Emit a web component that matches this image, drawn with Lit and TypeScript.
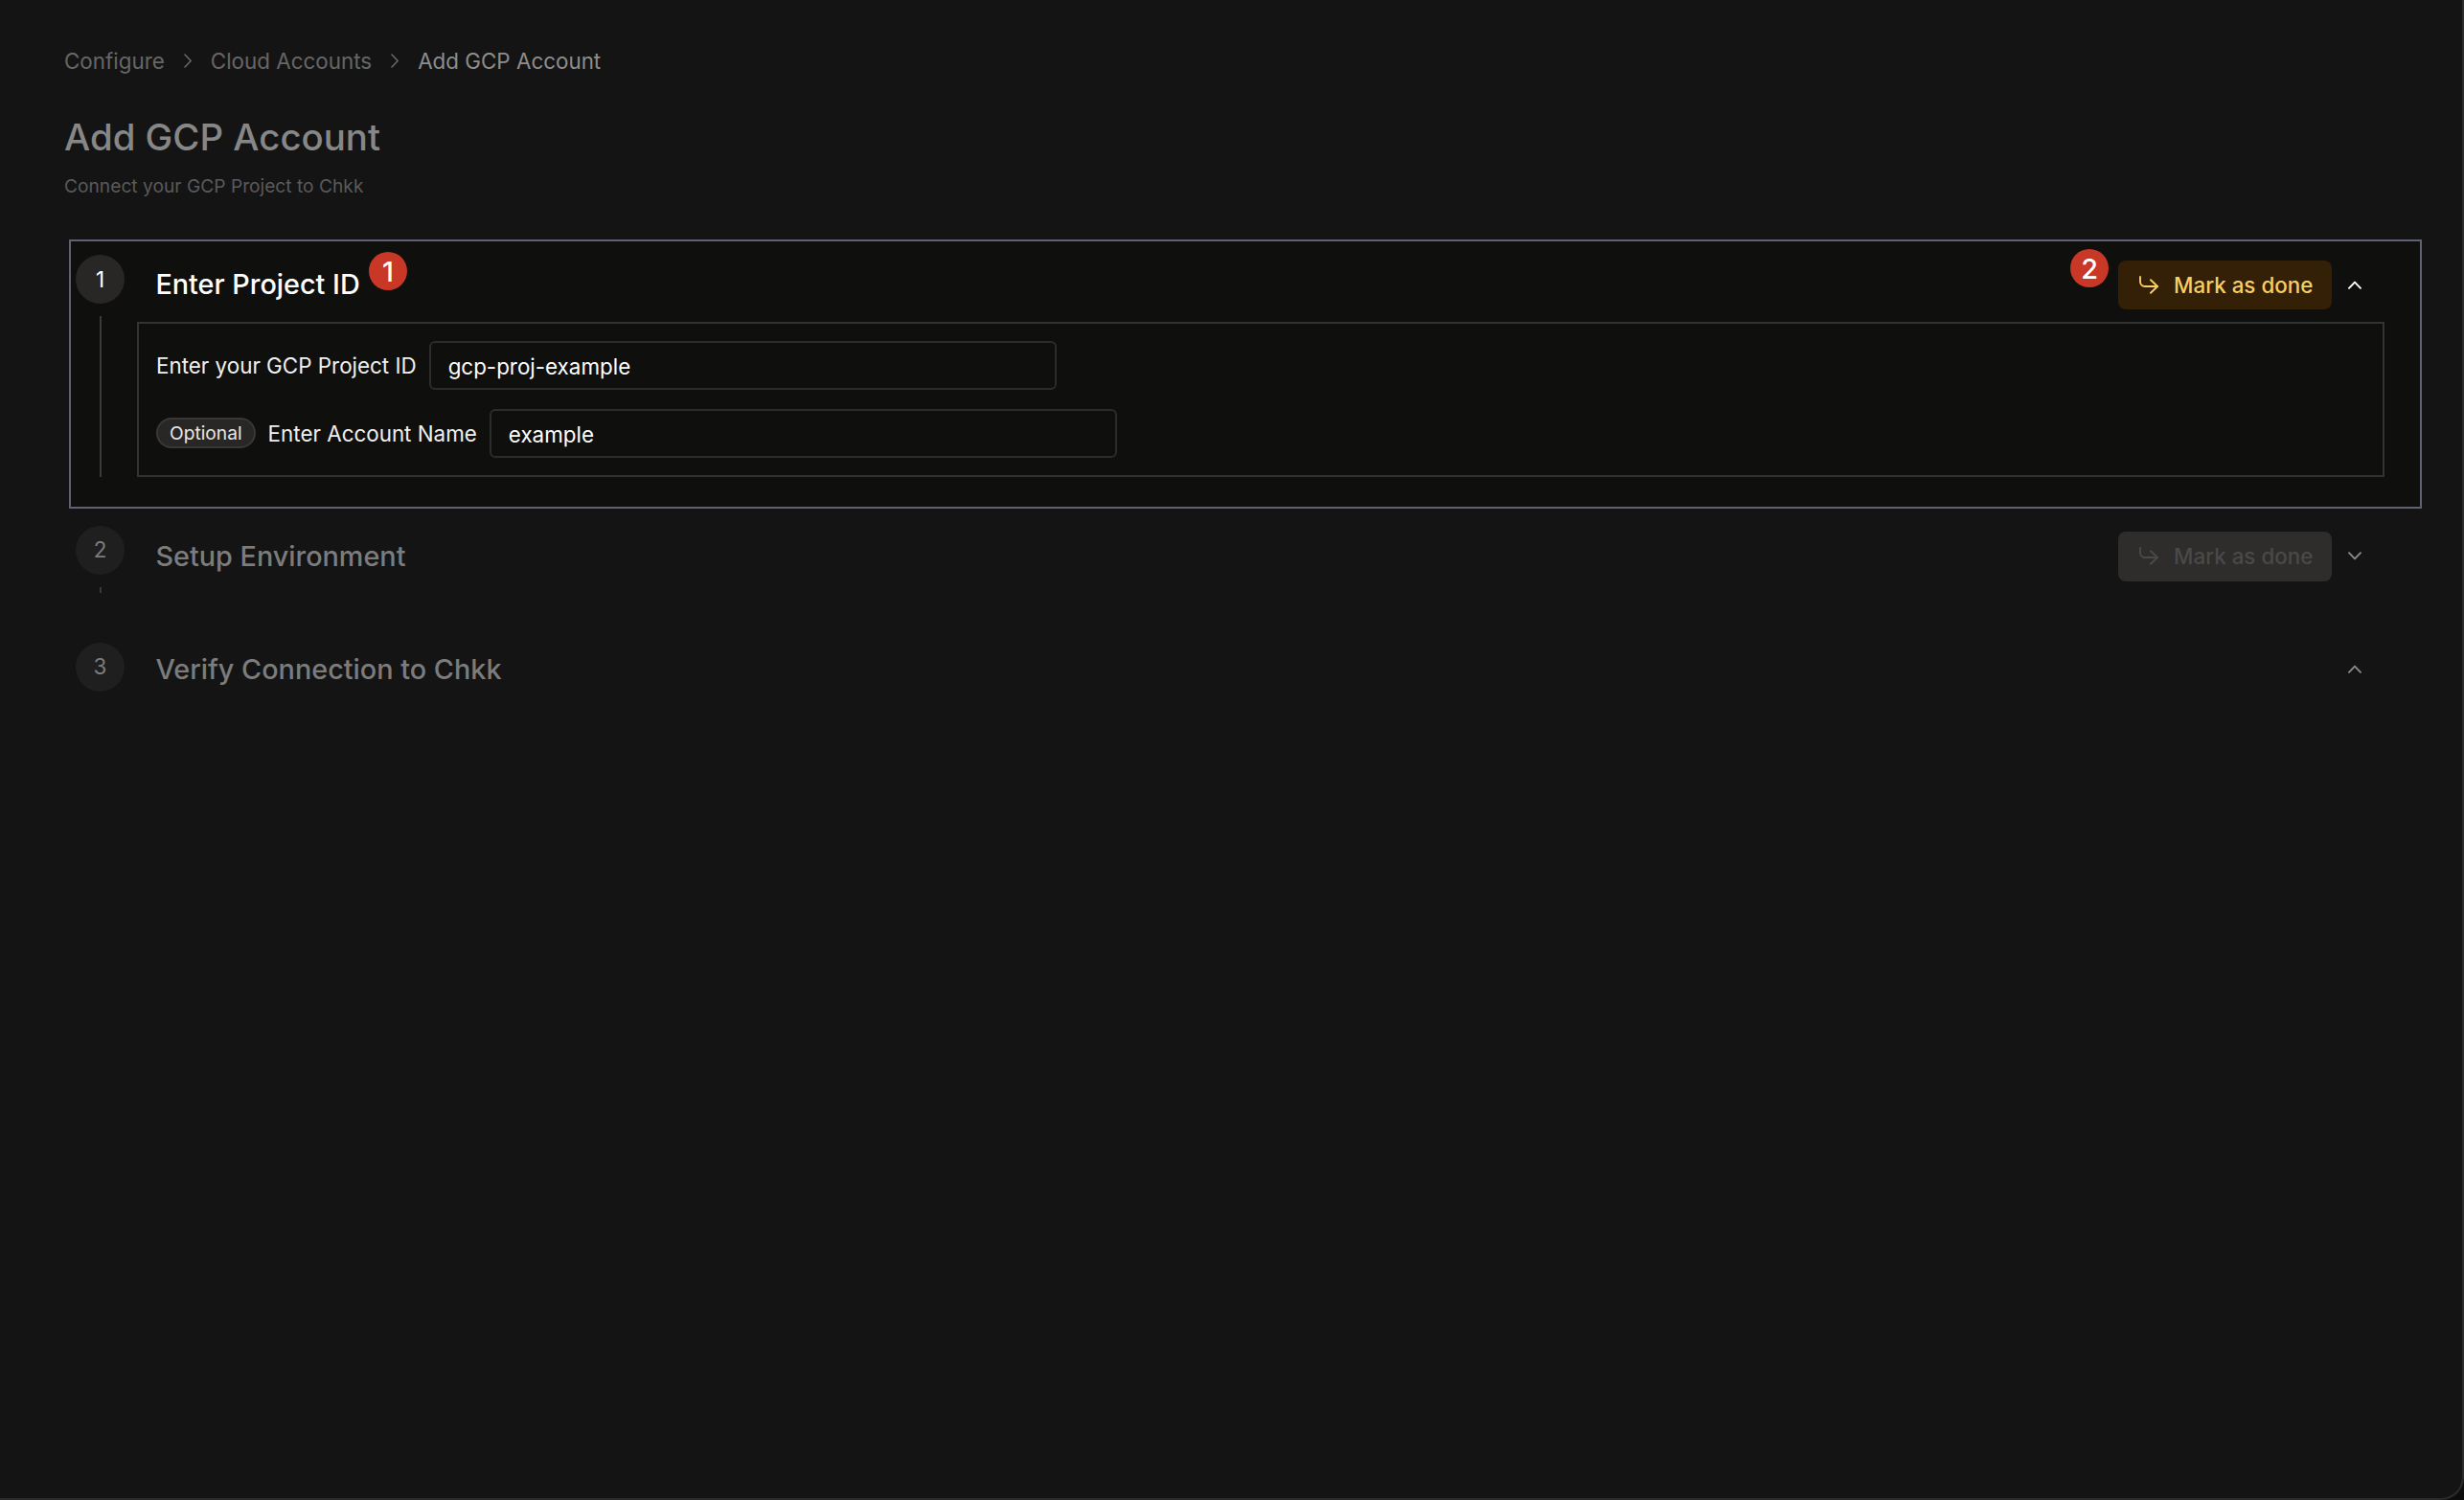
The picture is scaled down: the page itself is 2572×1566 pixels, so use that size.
import { LitElement, html, css } from "lit";
import { customElement } from "lit/decorators.js";

const arrow = html`<svg class="arrow" viewBox="0 0 20 19" fill="none" stroke="currentColor" stroke-width="1.9" stroke-linecap="round" stroke-linejoin="round"><path d="M1 1V6a5 5 0 0 0 5 5H19"/><path d="M12 4.2l7 6.8-7 6.8"/></svg>`;
const chev = (up: boolean) => html`<svg class="chev" viewBox="0 0 14 9" fill="none" stroke="currentColor" stroke-width="1.9" stroke-linecap="round" stroke-linejoin="round"><path d=${up ? "M1 7.8L7 1.6l6 6.2" : "M1 1.2l6 6.2 6-6.2"}/></svg>`;
const crumbChev = html`<svg class="crumb-chev" viewBox="0 0 8 15" fill="none" stroke="currentColor" stroke-width="1.5" stroke-linecap="round" stroke-linejoin="round"><path d="M1 1l6.2 6.5L1 14"/></svg>`;

@customElement("app-root")
export class AppRoot extends LitElement {
  static styles = css`
    :host { display: block; height: 1566px; background: #0d0d0d; font-family: Inter, "Noto Sans", sans-serif; color: #fff; overflow: hidden; }
    * { box-sizing: border-box; }
    .frame { height: 100%; background: #141414; border-right: 2px solid #2b2b2b; border-bottom: 2px solid #2b2b2b; border-bottom-right-radius: 24px; padding: 46px 0 0 67px; }
    .crumbs { display: flex; align-items: center; height: 35px; font-size: 22.4px; color: #666; }
    .crumbs .cur { color: #8d8d8d; }
    .crumb-chev { width: 8px; height: 15px; margin: 0 20px; color: #6a6a6a; flex: none; }
    h1 { margin: 36px 0 0; font-size: 38.4px; line-height: 52px; font-weight: 500; color: #878787; }
    .sub { margin-top: 11px; font-size: 19.2px; line-height: 28px; color: #5a5a5a; }
    .steps { margin: 42px 42px 0 5px; }
    .step { position: relative; display: flex; border: 2px solid transparent; padding-left: 5px; }
    .step.active { height: 281px; border-color: #5f6273; background: #0f0f0e; padding-top: 14px; }
    .step.two { height: 126px; padding-top: 16px; }
    .step.three { height: 100px; padding-top: 12px; }
    .rail { width: 51px; flex: none; display: flex; flex-direction: column; align-items: center; }
    .num { width: 51px; height: 51px; border-radius: 50%; background: #292726; font-size: 22.4px; display: flex; align-items: center; justify-content: center; color: #fff; padding-bottom: 1px; }
    .step.dim .num { background: #201f1f; color: #7d7d7d; padding-bottom: 2px; }
    .line { width: 2px; background: #3a3a38; margin-top: 13px; height: 168px; }
    .two .line { height: 6px; }
    .main { flex: 1; margin: 6px 0 0 33px; min-width: 0; }
    .three .main { margin-top: 2px; }
    .head { display: flex; align-items: center; height: 51px; }
    .title { font-size: 28.8px; font-weight: 500; color: #fff; padding-bottom: 2px; margin-left: -0.6px; }
    .dim .title { color: #7c7c7c; padding-bottom: 0; }
    .spacer { flex: 1; }
    .btn { width: 223px; height: 51px; border-radius: 8px; background: #341f07; color: #f7ce64; font-size: 22.4px; font-weight: 500; display: flex; align-items: center; padding-left: 22px; }
    .btn.off { height: 52px; background: #2e2d2c; color: #4a4948; }
    .arrow { width: 20px; height: 19px; margin-right: 16px; flex: none; }
    .chev { width: 14px; height: 9px; color: #fff; margin: 0 61px 0 17px; flex: none; }
    .dim .chev { color: #8a8a8a; }
    .box { margin: 13px 37px 0 -20px; height: 162px; border: 2px solid #333331; padding: 18px; display: flex; flex-direction: column; gap: 20px; }
    .row { display: flex; align-items: center; height: 51px; font-size: 22.4px; color: #f0f0f0; }
    .label { margin-right: 13px; }
    .input { width: 655px; height: 51px; border: 2px solid #2c2c2a; border-radius: 6px; display: flex; align-items: center; padding: 2px 0 0 18px; color: #fff; }
    .opt { height: 32px; padding: 0 12px; border-radius: 16px; background: #292726; border: 2px solid #393836; font-size: 19.2px; color: #e6e6e6; display: flex; align-items: center; margin: -2px 13px 0 0; }
    .badge { position: absolute; width: 40px; height: 40px; border-radius: 50%; background: #c93726; color: #fff; font-size: 28.8px; font-weight: 500; display: flex; align-items: center; justify-content: center; }
    .b1 { left: 311px; top: 11px; }
    .b2 { left: 2087px; top: 8px; }
  `;

  render() {
    return html`<div class="frame">
      <div class="crumbs"><span>Configure</span>${crumbChev}<span>Cloud Accounts</span>${crumbChev}<span class="cur">Add GCP Account</span></div>
      <h1>Add GCP Account</h1>
      <div class="sub">Connect your GCP Project to Chkk</div>
      <div class="steps">
        <div class="step active">
          <div class="rail"><div class="num">1</div><div class="line"></div></div>
          <div class="main">
            <div class="head"><span class="title">Enter Project ID</span><span class="spacer"></span>
              <div class="btn">${arrow}Mark as done</div>${chev(true)}</div>
            <div class="box">
              <div class="row"><span class="label">Enter your GCP Project ID</span><div class="input">gcp-proj-example</div></div>
              <div class="row"><span class="opt">Optional</span><span class="label">Enter Account Name</span><div class="input">example</div></div>
            </div>
          </div>
          <div class="badge b1">1</div>
          <div class="badge b2">2</div>
        </div>
        <div class="step two dim">
          <div class="rail"><div class="num">2</div><div class="line"></div></div>
          <div class="main"><div class="head"><span class="title">Setup Environment</span><span class="spacer"></span>
            <div class="btn off">${arrow}Mark as done</div>${chev(false)}</div></div>
        </div>
        <div class="step three dim">
          <div class="rail"><div class="num">3</div></div>
          <div class="main"><div class="head"><span class="title">Verify Connection to Chkk</span><span class="spacer"></span>${chev(true)}</div></div>
        </div>
      </div>
    </div>`;
  }
}
